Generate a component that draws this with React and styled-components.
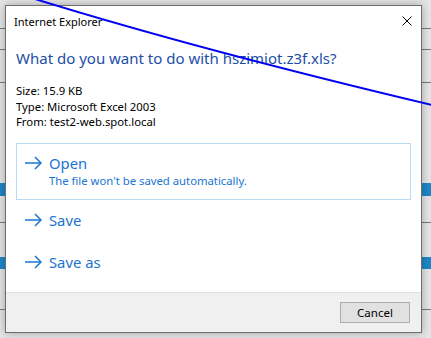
import React from 'react';
import styled, { createGlobalStyle } from 'styled-components';

const GlobalStyle = createGlobalStyle`
  html, body {
    margin: 0;
    padding: 0;
    background: #e6e6e6;
    overflow: hidden;
  }
  body {
    font-family: "Noto Sans", "Open Sans", sans-serif;
  }
`;

const backdropRows = [
  { height: 28, line: true },
  { height: 20, line: true },
  { height: 32, line: true },
  { height: 100 },
  { height: 13, selected: true },
  { height: 26, line: true },
  { height: 34 },
  { height: 12, selected: true },
  { height: 40, line: true },
  { height: 40 },
];

const options = [
  { label: 'Open', note: "The file won't be saved automatically.", focused: true },
  { label: 'Save' },
  { label: 'Save as' },
];

const Screen = styled.div`
  position: relative;
  width: 431px;
  height: 338px;
  overflow: hidden;
  background: #e6e6e6;
`;

const Backdrop = styled.div`
  display: flex;
  flex-direction: column;
`;

const BackdropRow = styled.div`
  height: ${(props) => props.height}px;
  background: ${(props) => (props.selected ? '#1e88c9' : 'transparent')};
  border-bottom: ${(props) => (props.line ? '1px solid #7a7a7a' : 'none')};
`;

const Dialog = styled.div`
  position: absolute;
  top: 5px;
  left: 5px;
  width: 417px;
  height: 328px;
  box-sizing: border-box;
  display: flex;
  flex-direction: column;
  background: #fff;
  border: 1px solid #6d6d6d;
  box-shadow: 0 0 9px rgba(0, 0, 0, 0.3);
`;

const TitleBar = styled.div`
  height: 30px;
  display: flex;
  align-items: center;
  justify-content: space-between;
  padding: 0 9px 0 8px;
  font-size: 11px;
  color: #000;
`;

const CloseButton = styled.svg`
  width: 10px;
  height: 10px;
  margin-top: -1px;
`;

const Body = styled.div`
  padding: 0 10px;
  display: flex;
  flex-direction: column;
`;

const Heading = styled.div`
  margin-top: 11px;
  font-size: 15px;
  line-height: 22px;
  color: #1c4ea6;
`;

const Info = styled.div`
  margin-top: 14px;
  font-size: 11.3px;
  line-height: 15.5px;
  color: #000;
`;

const Options = styled.div`
  margin-top: 13px;
  display: flex;
  flex-direction: column;
`;

const Option = styled.div`
  display: flex;
  align-items: flex-start;
  gap: 7px;
  padding: 9px 0 ${(props) => (props.hasNote ? 10 : 11)}px 7px;
  border: 1px solid ${(props) => (props.focused ? '#b7daf5' : 'transparent')};
  color: #1a74d2;
`;

const Arrow = styled.svg`
  width: 18px;
  height: 14px;
  margin-top: 3px;
  flex-shrink: 0;
`;

const OptionText = styled.div`
  display: flex;
  flex-direction: column;
`;

const OptionLabel = styled.span`
  font-size: 14.8px;
  line-height: 20px;
`;

const OptionNote = styled.span`
  font-size: 11.3px;
  line-height: 16px;
`;

const Footer = styled.div`
  margin-top: auto;
  height: 40px;
  display: flex;
  justify-content: flex-end;
  align-items: flex-start;
  padding: 9px 11px 0 0;
  box-sizing: border-box;
  background: #f0f0f0;
  border-top: 1px solid #dfdfdf;
`;

const Button = styled.button`
  width: 70px;
  height: 21px;
  padding: 0;
  font-family: inherit;
  font-size: 11.5px;
  color: #000;
  background: #e1e1e1;
  border: 1px solid #adadad;
`;

const Scribble = styled.svg`
  position: absolute;
  top: 0;
  left: 0;
  width: 431px;
  height: 338px;
  pointer-events: none;
`;

const ArrowIcon = () => (
  <Arrow viewBox="0 0 18 14" fill="none" stroke="currentColor" strokeWidth="1.5">
    <path d="M1 7h16" />
    <path d="M11 1l6 6-6 6" />
  </Arrow>
);

const App = () => (
  <>
    <GlobalStyle />
    <Screen>
      <Backdrop>
        {backdropRows.map((row, i) => (
          <BackdropRow key={i} height={row.height} line={row.line} selected={row.selected} />
        ))}
      </Backdrop>
      <Dialog>
        <TitleBar>
          <span>Internet Explorer</span>
          <CloseButton viewBox="0 0 10 10" stroke="#000" strokeWidth="1">
            <path d="M0.5 0.5l9 9M9.5 0.5l-9 9" />
          </CloseButton>
        </TitleBar>
        <Body>
          <Heading>What do you want to do with hszimiot.z3f.xls?</Heading>
          <Info>
            <div>Size: 15.9 KB</div>
            <div>Type: Microsoft Excel 2003</div>
            <div>From: test2-web.spot.local</div>
          </Info>
          <Options>
            {options.map((opt) => (
              <Option key={opt.label} focused={opt.focused} hasNote={!!opt.note}>
                <ArrowIcon />
                <OptionText>
                  <OptionLabel>{opt.label}</OptionLabel>
                  {opt.note && <OptionNote>{opt.note}</OptionNote>}
                </OptionText>
              </Option>
            ))}
          </Options>
        </Body>
        <Footer>
          <Button>Cancel</Button>
        </Footer>
      </Dialog>
      <Scribble viewBox="0 0 431 338">
        <path d="M35 -1 Q200 50 432 105" fill="none" stroke="#0000f5" strokeWidth="2" />
      </Scribble>
    </Screen>
  </>
);

export default App;
